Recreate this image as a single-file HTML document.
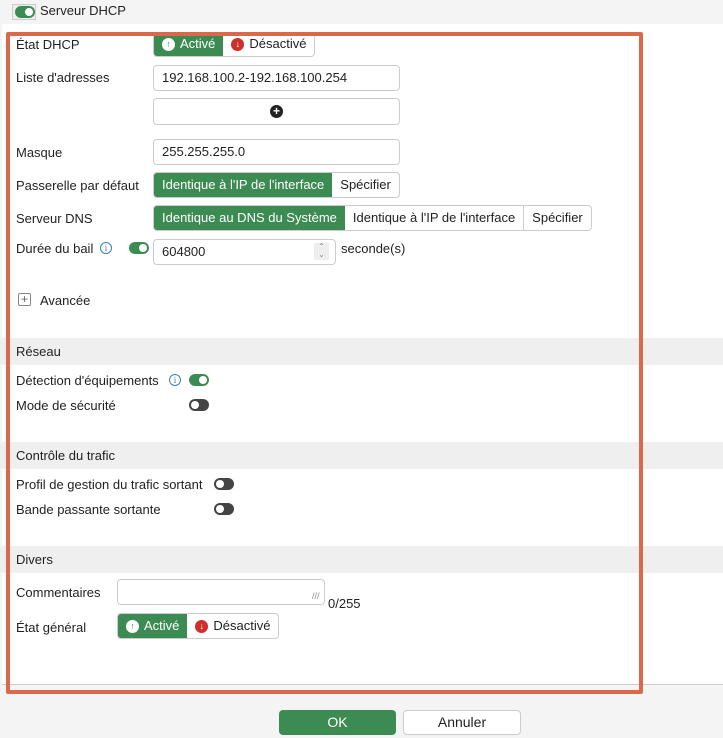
<!DOCTYPE html>
<html><head><meta charset="utf-8"><style>
*{box-sizing:border-box;margin:0;padding:0}
body{width:723px;height:738px;background:#f4f4f4;font-family:"Liberation Sans",sans-serif;font-size:13px;color:#222;position:relative;overflow:hidden}
.a{position:absolute}
.lbl{position:absolute;left:16px;white-space:nowrap}
.inp{position:absolute;background:#fff;border:1px solid #ccc;border-radius:4px;padding-left:8px;line-height:24px;height:26px}
.seg{position:absolute;display:flex;border:1px solid #ccc;border-radius:4px;overflow:hidden;height:26px;background:#fff}
.seg span{padding:0 8px;line-height:24px;white-space:nowrap;display:flex;align-items:center;gap:5px}
.on{background:#3c8b52;color:#fff}
.sep{border-left:1px solid #ccc}
.band{position:absolute;left:0;width:723px;height:27px;background:#efefef;padding-left:16px;line-height:27px}
.tg{position:absolute;width:20px;height:12px;border-radius:6px}
.tg.g{background:#3c8b52}.tg.d{background:#444}
.tg::after{content:"";position:absolute;top:2px;width:8px;height:8px;border-radius:50%;background:#fff}
.tg.g::after{right:2px}.tg.d::after{left:2px}
.ci{width:13px;height:13px;border-radius:50%;display:inline-flex;align-items:center;justify-content:center;font-size:9px;font-weight:bold}
.info{position:absolute;width:12px;height:12px;border:1px solid #3a7fb5;border-radius:50%;color:#3a7fb5;font-size:9px;line-height:10px;text-align:center;font-family:"Liberation Serif",serif}
</style></head><body>
<div class="a" style="left:12px;top:4px;width:24px;height:16px;border:1px solid #ccc;background:#eee"></div>
<div class="tg g" style="left:15px;top:6px"></div>
<div class="a" style="left:40px;top:3px;font-size:13px">Serveur DHCP</div>
<div class="a" style="left:2px;top:24px;width:721px;height:661px;background:#fff;border-bottom:1px solid #ccc"></div>

<div class="lbl" style="top:37px">État DHCP</div>
<div class="seg" style="left:153px;top:32px;height:25px;border-top:none;border-radius:0 0 4px 4px"><span class="on"><i class="ci" style="background:#fff;color:#3c8b52">↑</i>Activé</span><span><i class="ci" style="background:#d0302b;color:#fff">↓</i>Désactivé</span></div>

<div class="lbl" style="top:70px">Liste d'adresses</div>
<div class="inp" style="left:153px;top:65px;width:247px">192.168.100.2-192.168.100.254</div>
<div class="inp" style="left:153px;top:98px;width:247px;height:27px"></div>
<div class="a" style="left:270px;top:105px;width:13px;height:13px;border-radius:50%;background:#222;color:#fff;font-size:12px;line-height:13px;text-align:center;font-weight:bold">+</div>

<div class="lbl" style="top:145px">Masque</div>
<div class="inp" style="left:153px;top:139px;width:247px">255.255.255.0</div>

<div class="lbl" style="top:178px">Passerelle par défaut</div>
<div class="seg" style="left:153px;top:172px"><span class="on">Identique à l'IP de l'interface</span><span>Spécifier</span></div>

<div class="lbl" style="top:211px">Serveur DNS</div>
<div class="seg" style="left:153px;top:205px"><span class="on">Identique au DNS du Système</span><span>Identique à l'IP de l'interface</span><span class="sep">Spécifier</span></div>

<div class="lbl" style="top:241px">Durée du bail</div>
<div class="info" style="left:100px;top:242px">i</div>
<div class="tg g" style="left:129px;top:242px"></div>
<div class="inp" style="left:153px;top:239px;width:183px">604800</div>
<div class="a" style="left:314px;top:243px;width:15px;height:17px;background:#eee;color:#888;font-size:8px;line-height:8px;text-align:center">⌃<br>⌄</div>
<div class="a" style="left:341px;top:241px">seconde(s)</div>

<div class="a" style="left:18px;top:293px;width:13px;height:13px;border:1px solid #888;border-radius:2px;font-size:12px;line-height:10px;text-align:center;color:#666">+</div>
<div class="a" style="left:40px;top:293px">Avancée</div>

<div class="band" style="top:338px">Réseau</div>
<div class="lbl" style="top:373px">Détection d'équipements</div>
<div class="info" style="left:169px;top:374px">i</div>
<div class="tg g" style="left:189px;top:374px"></div>
<div class="lbl" style="top:398px">Mode de sécurité</div>
<div class="tg d" style="left:189px;top:399px"></div>

<div class="band" style="top:442px">Contrôle du trafic</div>
<div class="lbl" style="top:477px">Profil de gestion du trafic sortant</div>
<div class="tg d" style="left:214px;top:478px"></div>
<div class="lbl" style="top:502px">Bande passante sortante</div>
<div class="tg d" style="left:214px;top:503px"></div>

<div class="band" style="top:546px">Divers</div>
<div class="lbl" style="top:585px">Commentaires</div>
<div class="inp" style="left:117px;top:579px;width:208px;height:26px"></div>
<div class="a" style="left:312px;top:591px;color:#888;font-size:9px">///</div>
<div class="a" style="left:328px;top:596px">0/255</div>
<div class="lbl" style="top:620px">État général</div>
<div class="seg" style="left:117px;top:613px"><span class="on"><i class="ci" style="background:#fff;color:#3c8b52">↑</i>Activé</span><span><i class="ci" style="background:#d0302b;color:#fff">↓</i>Désactivé</span></div>

<div class="a" style="left:6px;top:32px;width:637px;height:662px;border:4px solid #d9694a;border-radius:2px"></div>

<div class="a" style="left:279px;top:710px;width:117px;height:25px;background:#3c8b52;border-radius:4px;color:#fff;text-align:center;line-height:25px;font-size:14px">OK</div>
<div class="a" style="left:403px;top:710px;width:118px;height:25px;background:#fff;border:1px solid #ccc;border-radius:4px;text-align:center;line-height:23px;font-size:14px">Annuler</div>
</body></html>
